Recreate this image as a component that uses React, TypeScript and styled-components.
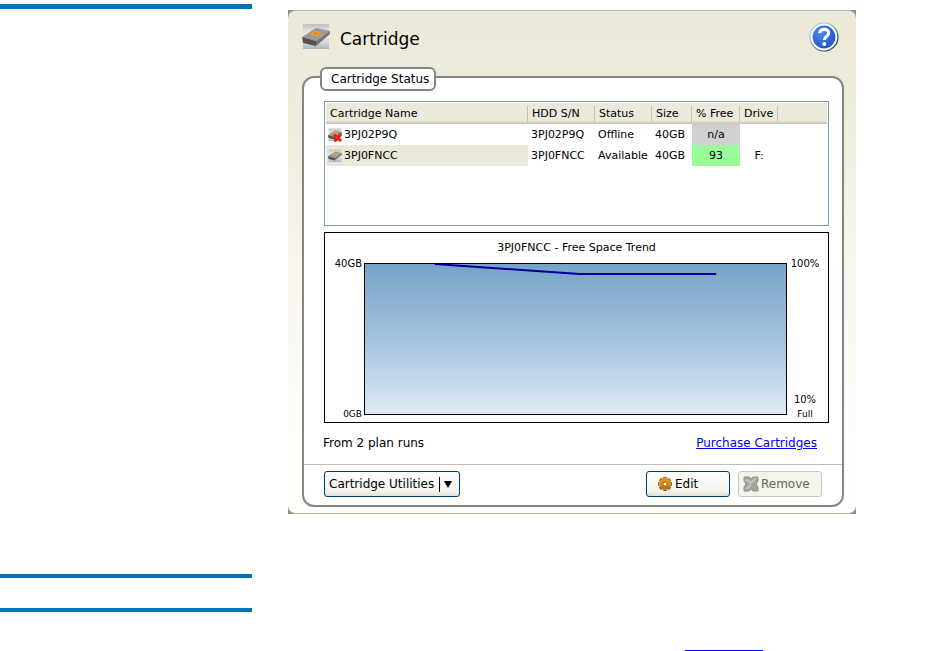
import React from "react";
import styled, { createGlobalStyle, css } from "styled-components";

const GlobalStyle = createGlobalStyle`
  *, *::before, *::after { box-sizing: border-box; }
  body {
    margin: 0;
    background: #fff;
    color: #000;
    font-family: "DejaVu Sans", Verdana, sans-serif;
    font-size: 11px;
    line-height: 16px;
  }
  h1, h2, h3, p { margin: 0; font-weight: normal; }
  button { font-family: inherit; color: inherit; }
`;

const Page = styled.div`
  display: grid;
  grid-template-columns: 252px minmax(0, 1fr);
  column-gap: 36px;
  min-height: 100vh;
  padding-right: 80px;
  overflow: hidden;
`;

const Rail = styled.aside`
  display: flex;
  flex-direction: column;
  padding-top: 4px;
`;

const Rule = styled.hr<{ $thick?: boolean }>`
  width: 100%;
  height: ${(p) => (p.$thick ? 5 : 4)}px;
  margin: 0;
  border: 0;
  background: #0072bc;
`;

const RailBody = styled.div`
  height: 565px;
`;

const RailHeading = styled.div`
  height: 30px;
`;

const Main = styled.main`
  display: flex;
  flex-direction: column;
  padding-top: 10px;
`;

const Frame = styled.section`
  background: #8f8d7e;
`;

const Panel = styled.div`
  padding: 0 12px 6px 14px;
  border: solid #bdbbad;
  border-width: 1px 0;
  border-radius: 8px;
  background: linear-gradient(#ece9d9 0, #eeecdd 90px, #f8f6ee 260px, #fefdfa 420px, #fefefb 100%);
`;

const PanelHeader = styled.header`
  display: flex;
  align-items: center;
  height: 65px;
  padding: 0 5px 14px 0;
`;

const Title = styled.h1`
  flex: 1;
  padding: 4px 0 0 10px;
  font-size: 17px;
  line-height: 24px;
`;

const HelpButton = styled.button`
  width: 30px;
  height: 30px;
  padding: 0;
  border: 0;
  background: none;
`;

const Group = styled.section`
  border: 2px solid #858585;
  border-radius: 12px;
  background: #fff;
`;

const GroupTitle = styled.h2`
  width: max-content;
  margin: -11px 0 0 16px;
  padding: 2px 5px 2px 9px;
  border: 2px solid #858585;
  border-radius: 6px;
  background: #fff;
  font-size: 12px;
  line-height: 16px;
`;

const GroupBody = styled.div`
  padding: 10px 13px 0 20px;
`;

const ListBox = styled.div`
  height: 125px;
  padding: 1px;
  border: 1px solid #7f9db9;
`;

const Table = styled.table`
  width: 100%;
  border-collapse: collapse;
  table-layout: fixed;
`;

const Col = styled.col<{ $w?: number }>`
  ${(p) => p.$w && css`width: ${p.$w}px;`}
`;

const Th = styled.th`
  height: 21px;
  padding: 0 0 0 4px;
  background: linear-gradient(to top, #cbc7b8 0, #d6d2c2 2px, #ebe9da 3px);
  font-weight: normal;
  text-align: left;
  white-space: nowrap;
`;

const ThLabel = styled.span<{ $last?: boolean }>`
  display: block;
  height: 16px;
  border-right: ${(p) => (p.$last ? "0" : "1px solid #c4c1b0")};
  box-shadow: ${(p) => (p.$last ? "none" : "1px 0 #fff")};
`;

const Td = styled.td<{ $bg?: string; $center?: boolean }>`
  height: 21px;
  padding: ${(p) => (p.$center ? "0" : "0 0 0 3px")};
  background: ${(p) => p.$bg ?? "transparent"};
  text-align: ${(p) => (p.$center ? "center" : "left")};
  white-space: nowrap;
`;

const NameCell = styled.span`
  display: flex;
  align-items: center;
  gap: 2px;
  height: 20px;
  margin-left: -1px;
`;

const Chart = styled.figure`
  display: grid;
  grid-template-columns: 39px minmax(0, 1fr) 41px;
  grid-template-rows: 30px 152px;
  height: 191px;
  margin: 6px 0 0;
  border: 1px solid #000;
`;

const ChartTitle = styled.figcaption`
  grid-column: 1 / -1;
  padding-top: 7px;
  text-align: center;
`;

const Axis = styled.div<{ $side: "left" | "right" }>`
  display: flex;
  flex-direction: column;
  align-items: ${(p) => (p.$side === "left" ? "flex-end" : "center")};
  padding-right: ${(p) => (p.$side === "left" ? 2 : 5)}px;
  margin: -6px 0;
  font-size: 10px;
  line-height: 14px;
`;

const Spacer = styled.span`
  flex: 1;
`;

const SmallTick = styled.span`
  font-size: 9px;
`;

const Plot = styled.div`
  border: 1px solid #000;
  background: linear-gradient(#76a3c9, #a9c5e0 55%, #dfeaf5);
`;

const PlotLine = styled.svg`
  display: block;
  width: 100%;
  height: 100%;
`;

const Summary = styled.div`
  display: flex;
  justify-content: space-between;
  padding: 12px 12px 13px 0;
  margin-left: -1px;
  font-size: 12px;
`;

const Link = styled.a`
  color: #0000e8;
`;

const Actions = styled.footer`
  display: flex;
  gap: 8px;
  padding: 6px 20px 8px 20px;
  border-top: 1px solid #bdbdbd;
`;

const Button = styled.button<{ $wide?: boolean }>`
  display: flex;
  align-items: center;
  gap: 2px;
  width: ${(p) => (p.$wide ? 136 : 84)}px;
  height: 26px;
  padding: 0 4px;
  padding-left: ${(p) => (p.$wide ? 4 : 10)}px;
  border: 1px solid #003c74;
  border-radius: 3px;
  background: linear-gradient(#fff, #f4f3ee 80%, #e2dfd4);
  font-size: 12px;
  line-height: 16px;
  white-space: nowrap;
  &:disabled {
    padding-left: 4px;
    border-color: #c9c7ba;
    background: #f5f4ea;
    color: #66665f;
  }
`;

const Split = styled.span`
  width: 1px;
  height: 15px;
  margin: 0 2px 0 3px;
  background: #000;
`;

const BottomNote = styled.p`
  display: flex;
  justify-content: flex-end;
  margin-top: auto;
  padding-right: 93px;
`;

const BareLink = styled.a`
  width: 78px;
  height: 16px;
  border-bottom: 1px solid #0000ff;
`;

function DriveIcon({ size, offline, detailed }: { size: number; offline?: boolean; detailed?: boolean }) {
  const id = `tile-${size}-${offline ? "off" : "on"}`;
  return (
    <svg width={size} height={size} viewBox="0 0 28 28" aria-hidden="true">
      <defs>
        <linearGradient id={id} x1="0" y1="0" x2="0" y2="1">
          <stop offset="0" stopColor="#bfc0c2" />
          <stop offset=".35" stopColor="#e9e9ea" />
          <stop offset=".7" stopColor="#dcdcde" />
          <stop offset="1" stopColor="#b4b6bb" />
        </linearGradient>
      </defs>
      <rect x="1" y="1" width="26" height="25" fill={`url(#${id})`} />
      <path d="M0 14 14 5l14 3-14 10z" fill="#9d9993" />
      <path d="M0 14l14 4v5L1 20z" fill="#55514c" />
      <path d="M14 18 28 8v3L14 23z" fill="#77736e" />
      <path d="m9 10 4-2 5 1 1 2-4 2-5-1z" fill="#f2a126" />
      {detailed && <path d="m11 10 6 1m-3-2-1 3" stroke="#d98a1c" strokeWidth="1" />}
      {offline && <path d="m12 13 14 13M26 12 13 27" stroke="#ee1c1c" strokeWidth="6" />}
    </svg>
  );
}

function HelpIcon() {
  return (
    <svg width="30" height="30" viewBox="0 0 30 30" aria-hidden="true">
      <defs>
        <linearGradient id="help-edge" x1="0" y1="0" x2="1" y2="1">
          <stop offset=".3" stopColor="#9fc4ee" />
          <stop offset=".8" stopColor="#25345f" />
        </linearGradient>
        <radialGradient id="help-fill" cx=".35" cy=".3" r=".8">
          <stop offset="0" stopColor="#4d8ae6" />
          <stop offset="1" stopColor="#1f4fc0" />
        </radialGradient>
      </defs>
      <circle cx="15" cy="15" r="14" fill="#fff" stroke="url(#help-edge)" strokeWidth="1.2" />
      <circle cx="15" cy="15" r="11.4" fill="url(#help-fill)" />
      <path d="M10.7 11.2c.3-5 9-5 9-.2 0 3.3-4.3 3.2-4.3 7" fill="none" stroke="#fff" strokeWidth="3.2" />
      <circle cx="15.3" cy="22" r="2" fill="#fff" />
    </svg>
  );
}

function GearIcon() {
  return (
    <svg width="16" height="16" viewBox="0 0 16 16" aria-hidden="true">
      <path d="M8 1v14M1 8h14M3 3l10 10M13 3 3 13" stroke="#9c5c0c" strokeWidth="3.6" />
      <path d="M8 1.8v12M1.8 8h12M3.6 3.6l8.4 8.4M12.4 3.6 4 12" stroke="#e39a25" strokeWidth="2.2" />
      <circle cx="8" cy="8" r="5" fill="#dc911c" />
      <path d="M4 10a4.6 4.6 0 0 0 8 0" fill="none" stroke="#b06c0e" strokeWidth="1.6" />
      <circle cx="8" cy="8" r="2.1" fill="#fff" stroke="#965609" />
    </svg>
  );
}

function RemoveIcon() {
  return (
    <svg width="16" height="16" viewBox="0 0 16 16" aria-hidden="true">
      <path d="M1 1h5l2 2 2-2h5v4l-2 3 2 3v4h-5l-2-2-2 2H1v-4l2-3-2-3z" fill="#a2a2a0" stroke="#929290" />
      <path d="m2 4 4 1 2 2 5-5M3 13l5-4" stroke="#c4c4c2" strokeWidth="2" fill="none" />
    </svg>
  );
}

const columns: { label: string; width?: number }[] = [
  { label: "Cartridge Name", width: 202 },
  { label: "HDD S/N", width: 67 },
  { label: "Status", width: 57 },
  { label: "Size", width: 40 },
  { label: "% Free", width: 48 },
  { label: "Drive", width: 38 },
  { label: "" },
];

const cartridges = [
  { name: "3PJ02P9Q", status: "Offline", size: "40GB", free: "n/a", drive: "", color: "#d0d0d0", offline: true },
  { name: "3PJ0FNCC", status: "Available", size: "40GB", free: "93", drive: "F:", color: "#99fd99", selected: true },
];

export default function App() {
  return (
    <>
      <GlobalStyle />
      <Page>
        <Rail>
          <Rule $thick />
          <RailBody />
          <Rule />
          <RailHeading />
          <Rule />
        </Rail>
        <Main>
          <Frame>
            <Panel>
              <PanelHeader>
                <DriveIcon size={28} detailed />
                <Title>Cartridge</Title>
                <HelpButton type="button" aria-label="Help">
                  <HelpIcon />
                </HelpButton>
              </PanelHeader>
              <Group>
                <GroupTitle>Cartridge Status</GroupTitle>
                <GroupBody>
                  <ListBox>
                    <Table>
                      <colgroup>
                        {columns.map((c, i) => (
                          <Col key={i} $w={c.width} />
                        ))}
                      </colgroup>
                      <thead>
                        <tr>
                          {columns.map((c, i) => (
                            <Th key={i}>
                              <ThLabel $last={!c.label}>{c.label}</ThLabel>
                            </Th>
                          ))}
                        </tr>
                      </thead>
                      <tbody>
                        {cartridges.map((c) => (
                          <tr key={c.name}>
                            <Td $bg={c.selected ? "#ebe8d8" : undefined}>
                              <NameCell>
                                <DriveIcon size={14} offline={c.offline} />
                                {c.name}
                              </NameCell>
                            </Td>
                            <Td>{c.name}</Td>
                            <Td>{c.status}</Td>
                            <Td>{c.size}</Td>
                            <Td $bg={c.color} $center>
                              {c.free}
                            </Td>
                            <Td $center>{c.drive}</Td>
                            <Td />
                          </tr>
                        ))}
                      </tbody>
                    </Table>
                  </ListBox>
                  <Chart>
                    <ChartTitle>3PJ0FNCC - Free Space Trend</ChartTitle>
                    <Axis $side="left">
                      <span>40GB</span>
                      <Spacer />
                      <SmallTick>0GB</SmallTick>
                    </Axis>
                    <Plot>
                      <PlotLine viewBox="0 0 422 150" preserveAspectRatio="none" aria-hidden="true">
                        <path
                          d="M70 0 215 10H352"
                          fill="none"
                          stroke="#000099"
                          strokeWidth="2"
                          vectorEffect="non-scaling-stroke"
                        />
                      </PlotLine>
                    </Plot>
                    <Axis $side="right">
                      <span>100%</span>
                      <Spacer />
                      <span>10%</span>
                      <SmallTick>Full</SmallTick>
                    </Axis>
                  </Chart>
                  <Summary>
                    <span>From 2 plan runs</span>
                    <Link href="#purchase">Purchase Cartridges</Link>
                  </Summary>
                </GroupBody>
                <Actions>
                  <Button type="button" $wide>
                    Cartridge Utilities
                    <Split />
                    <svg width="8" height="7" viewBox="0 0 8 7" aria-hidden="true">
                      <path d="M0 0h8L4 7z" />
                    </svg>
                  </Button>
                  <Spacer />
                  <Button type="button">
                    <GearIcon />
                    Edit
                  </Button>
                  <Button type="button" disabled>
                    <RemoveIcon />
                    Remove
                  </Button>
                </Actions>
              </Group>
            </Panel>
          </Frame>
          <BottomNote>
            <BareLink href="#more" />
          </BottomNote>
        </Main>
      </Page>
    </>
  );
}
